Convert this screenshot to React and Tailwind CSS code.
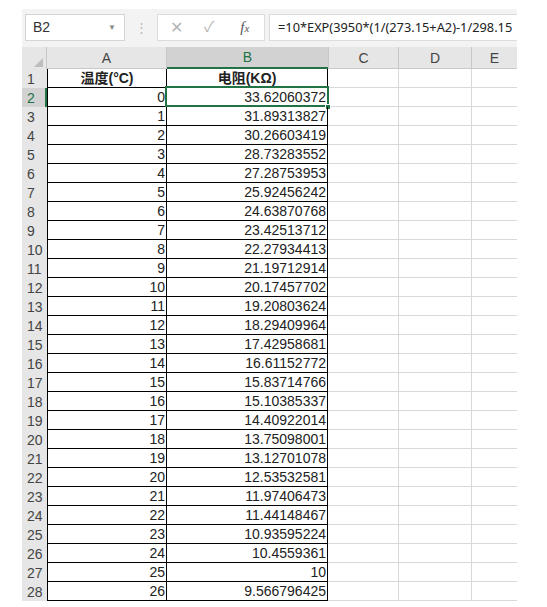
import React from "react";

const rows = [
  ["0", "33.62060372"],
  ["1", "31.89313827"],
  ["2", "30.26603419"],
  ["3", "28.73283552"],
  ["4", "27.28753953"],
  ["5", "25.92456242"],
  ["6", "24.63870768"],
  ["7", "23.42513712"],
  ["8", "22.27934413"],
  ["9", "21.19712914"],
  ["10", "20.17457702"],
  ["11", "19.20803624"],
  ["12", "18.29409964"],
  ["13", "17.42958681"],
  ["14", "16.61152772"],
  ["15", "15.83714766"],
  ["16", "15.10385337"],
  ["17", "14.40922014"],
  ["18", "13.75098001"],
  ["19", "13.12701078"],
  ["20", "12.53532581"],
  ["21", "11.97406473"],
  ["22", "11.44148467"],
  ["23", "10.93595224"],
  ["24", "10.4559361"],
  ["25", "10"],
  ["26", "9.566796425"],
];

const font = { fontFamily: '"Liberation Sans", "Noto Sans CJK SC", sans-serif' };

function RowHead({ n, active }) {
  return (
    <div
      className={
        "w-[25px] h-full pl-[5px] flex items-center text-[14px] leading-none " +
        (active
          ? "bg-[#d2d2d2] text-[#217346] border-r-2 border-[#217346]"
          : "bg-[#e6e6e6] text-[#444]")
      }
    >
      {n}
    </div>
  );
}

function GreyCells() {
  return (
    <>
      <div className="w-[71px] h-full border-r border-b border-[#d9d9d9]" />
      <div className="w-[73px] h-full border-r border-b border-[#d9d9d9]" />
      <div className="w-[45px] h-full border-b border-[#d9d9d9]" />
    </>
  );
}

export default function App() {
  return (
    <div className="w-[547px] h-[607px] bg-white overflow-hidden text-[#222]" style={font}>
      <div className="ml-[22px] w-[495px] pt-[9px]">
        {/* formula bar */}
        <div className="h-[38px] bg-[#f3f3f3] flex items-start pt-[5px]">
          <div className="ml-[3px] w-[100px] h-[27px] bg-white border border-[#d4d4d4] flex items-center pl-[7px] pr-[8px] justify-between">
            <span className="text-[14px] text-[#333]">B2</span>
            <span className="text-[8px] text-[#888]">▼</span>
          </div>
          <div className="w-[32px] h-[27px] flex items-center justify-center text-[#bbb] text-[13px]">⋮</div>
          <div className="w-[108px] h-[27px] bg-white border border-[#dcdcdc] flex items-center text-[#b5b5b5]">
            <span className="ml-[12px] text-[16px]">✕</span>
            <span className="ml-[21px] text-[15px]">✓</span>
            <span
              className="ml-[26px] italic text-[15px] text-[#555]"
              style={{ fontFamily: '"Liberation Serif", serif' }}
            >
              f<span className="text-[11px]">x</span>
            </span>
          </div>
          <div className="ml-[4px] flex-1 h-[27px] bg-white border-y border-l border-[#dcdcdc] flex items-center pl-[8px] overflow-hidden whitespace-nowrap">
            <span className="text-[12.8px] text-[#222]" style={{ fontFamily: '"Noto Sans", sans-serif' }}>
              =10*EXP(3950*(1/(273.15+A2)-1/298.15
            </span>
          </div>
        </div>

        {/* column header */}
        <div className="h-[22px] flex bg-[#e6e6e6] text-[14px] text-[#444] leading-none">
          <div className="w-[25px] h-full relative border-r border-[#c8c8c8]">
            <div className="absolute right-[3px] bottom-[2px] w-0 h-0 border-l-[9px] border-l-transparent border-b-[9px] border-b-[#bdbdbd]" />
          </div>
          <div className="w-[120px] h-full flex items-center justify-center border-r border-b border-[#c8c8c8]">A</div>
          <div className="w-[161px] h-full flex items-center justify-center bg-[#d2d2d2] text-[#217346] border-b-2 border-[#217346]">B</div>
          <div className="w-[71px] h-full flex items-center justify-center border-r border-l border-b border-[#c8c8c8]">C</div>
          <div className="w-[73px] h-full flex items-center justify-center border-r border-b border-[#c8c8c8]">D</div>
          <div className="w-[45px] h-full flex items-center justify-center border-b border-[#c8c8c8]">E</div>
        </div>

        {/* row 1 */}
        <div className="h-[19px] flex">
          <RowHead n="1" />
          <div className="w-[120px] h-full border-l border-r border-b border-black flex items-center justify-center font-bold text-[14px] leading-none">
            温度(°C)
          </div>
          <div className="w-[161px] h-full border-r border-b border-black flex items-center justify-center font-bold text-[14px] leading-none">
            电阻(KΩ)
          </div>
          <GreyCells />
        </div>

        {rows.map((r, i) => (
          <div key={i} className="h-[19px] flex">
            <RowHead n={i + 2} active={i === 0} />
            <div className="w-[120px] h-full border-l border-r border-b border-black flex items-center justify-end pr-[1px] text-[14px] leading-none">
              {r[0]}
            </div>
            <div className="w-[161px] h-full border-r border-b border-black flex items-center justify-end pr-[1px] text-[14px] leading-none relative">
              {r[1]}
              {i === 0 && (
                <>
                  <div className="absolute -left-[2px] -top-[2px] -right-[2px] -bottom-[1px] border-2 border-[#217346]" />
                  <div className="absolute -right-[4px] -bottom-[4px] w-[6px] h-[6px] bg-[#217346] border border-white" />
                </>
              )}
            </div>
            <GreyCells />
          </div>
        ))}
      </div>
    </div>
  );
}
